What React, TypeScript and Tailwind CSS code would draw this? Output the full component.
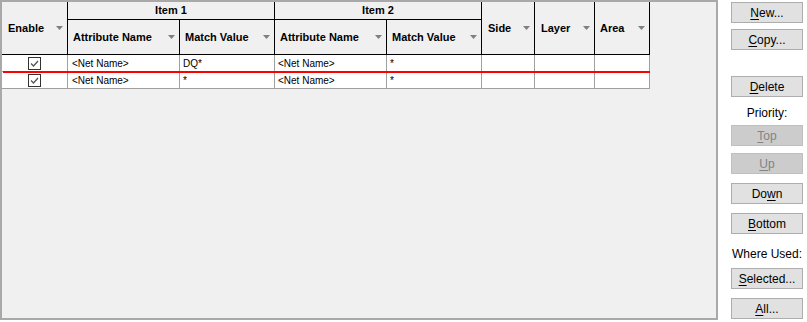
import React from "react";

const Tri = () => (
  <svg width="7" height="4" viewBox="0 0 7 4" className="absolute right-[4px] top-1/2 -translate-y-1/2">
    <path d="M0 0 H7 L3.5 4 Z" fill="#7f7f7f" />
  </svg>
);

const Check = () => (
  <div className="w-[13px] h-[13px] border border-[#333333] bg-white flex items-center justify-center">
    <svg width="11" height="11" viewBox="0 0 11 11">
      <path d="M2 5.5 L4.5 8 L9 3" stroke="#555555" strokeWidth="1.3" fill="none" />
    </svg>
  </div>
);

function HCell({ children, className = "", tri = true }: { children: React.ReactNode; className?: string; tri?: boolean }) {
  return (
    <div className={`relative flex items-center border-r border-b border-black text-[11px] font-bold text-black ${className}`}>
      <span>{children}</span>
      {tri && <Tri />}
    </div>
  );
}

function Btn({ label, u, disabled = false, className = "" }: { label: string; u: number; disabled?: boolean; className?: string }) {
  const before = label.slice(0, u);
  const ch = label.slice(u, u + 1);
  const after = label.slice(u + 1);
  return (
    <div
      className={`h-[21px] w-[72px] flex items-center justify-center border text-[12px] leading-none ${
        disabled ? "bg-[#cccccc] border-[#bfbfbf] text-[#838383]" : "bg-[#e1e1e1] border-[#adadad] text-black"
      } ${className}`}
    >
      <span>
        {before}
        <span className="underline underline-offset-[2px]">{ch}</span>
        {after}
      </span>
    </div>
  );
}

const cols = "grid-cols-[66px_112px_95px_112px_95px_53px_60px_55px]";

function BodyRow({ a1, m1, a2, m2 }: { a1: string; m1: string; a2: string; m2: string }) {
  const c = "h-[17px] bg-white border-r border-b border-[#a0a0a0] flex items-center text-[10px] text-black";
  return (
    <div className={`grid ${cols}`}>
      <div className={`${c} justify-center`}>
        <Check />
      </div>
      <div className={`${c} pl-[4px]`}>{a1}</div>
      <div className={`${c} pl-[3px]`}>{m1}</div>
      <div className={`${c} pl-[3px]`}>{a2}</div>
      <div className={`${c} pl-[3px]`}>{m2}</div>
      <div className={c}></div>
      <div className={c}></div>
      <div className={c}></div>
    </div>
  );
}

export default function App() {
  return (
    <div className="w-[807px] h-[322px] bg-white flex font-['Liberation_Sans',Arial,sans-serif]">
      <div className="w-[718px] h-[320px] border-2 border-[#a9a9a9] bg-[#f0f0f0] relative">
        <div className={`grid ${cols} grid-rows-[18px_35px]`}>
          <HCell className="row-span-2 pl-[6px]">Enable</HCell>
          <HCell className="col-span-2 justify-center" tri={false}>Item 1</HCell>
          <HCell className="col-span-2 justify-center" tri={false}>Item 2</HCell>
          <HCell className="row-span-2 pl-[6px]">Side</HCell>
          <HCell className="row-span-2 pl-[6px]">Layer</HCell>
          <HCell className="row-span-2 pl-[5px]">Area</HCell>
          <HCell className="pl-[5px]">Attribute Name</HCell>
          <HCell className="pl-[5px]">Match Value</HCell>
          <HCell className="pl-[5px]">Attribute Name</HCell>
          <HCell className="pl-[5px]">Match Value</HCell>
        </div>
        <BodyRow a1="<Net Name>" m1="DQ*" a2="<Net Name>" m2="*" />
        <BodyRow a1="<Net Name>" m1="*" a2="<Net Name>" m2="*" />
        <div className="absolute left-[1px] top-[69px] w-[647px] h-[2px] bg-[#ff0000]" />
      </div>
      <div className="ml-[13px] w-[72px] flex flex-col items-center">
        <Btn label="New..." u={0} className="mt-[2px]" />
        <Btn label="Copy..." u={0} className="mt-[6px]" />
        <Btn label="Delete" u={0} className="mt-[26px]" />
        <div className="mt-[9px] h-[14px] text-[12px] leading-[14px] text-black">Priority:</div>
        <Btn label="Top" u={0} disabled className="mt-[5px]" />
        <Btn label="Up" u={0} disabled className="mt-[7px]" />
        <Btn label="Down" u={2} className="mt-[9px]" />
        <Btn label="Bottom" u={0} className="mt-[9px]" />
        <div className="mt-[13px] h-[14px] text-[12px] leading-[14px] text-black whitespace-nowrap">Where Used:</div>
        <Btn label="Selected..." u={0} className="mt-[7px]" />
        <Btn label="All..." u={0} className="mt-[9px]" />
      </div>
    </div>
  );
}
